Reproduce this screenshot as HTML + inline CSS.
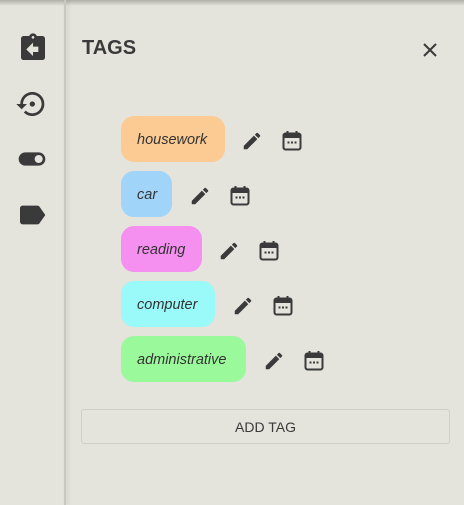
<!DOCTYPE html>
<html><head><style>
html,body{margin:0;padding:0}
body{width:464px;height:505px;background:#e4e4dc;position:relative;overflow:hidden;font-family:"Liberation Sans",sans-serif;color:#3a3a3a}
.top{position:absolute;left:0;top:0;width:464px;height:6px;background:linear-gradient(#b0b0a8,rgba(228,228,220,0))}
.side{position:absolute;left:64px;top:0;width:2px;height:505px;background:#c8c8c0;box-shadow:2px 0 4px rgba(0,0,0,.12)}
.ic{position:absolute;fill:#3a3a3a}
h1{position:absolute;left:82px;top:37px;margin:0;font-size:20px;font-weight:bold;color:#3a3a3a}
.chip{position:absolute;left:121px;height:46px;border-radius:13px;font-style:italic;font-size:14.5px;line-height:48px;padding:0 16px;box-sizing:border-box;color:#333}
.btn{position:absolute;left:81px;top:409px;width:369px;height:35px;border:1px solid #cfcfc7;border-radius:3px;box-sizing:border-box;text-align:center;line-height:34px;font-size:14px}
</style></head><body>
<div class="top"></div>
<div class="side"></div>
<svg class="ic" style="left:17px;top:32px" width="32" height="32" viewBox="0 0 24 24"><path d="M19 3h-4.18C14.4 1.84 13.3 1 12 1c-1.3 0-2.4.84-2.82 2H5c-1.1 0-2 .9-2 2v14c0 1.1.9 2 2 2h14c1.1 0 2-.9 2-2V5c0-1.1-.9-2-2-2zm-7 0c.55 0 1 .45 1 1s-.45 1-1 1-1-.45-1-1 .45-1 1-1zm4 12h-4v3l-5-5 5-5v3h4v4z"/></svg>
<svg class="ic" style="left:15px;top:88px" width="32" height="32" viewBox="0 0 24 24"><path d="M13 3c-4.97 0-9 4.03-9 9H1l3.89 3.89.07.14L9 12H6c0-3.87 3.13-7 7-7s7 3.13 7 7-3.13 7-7 7c-1.93 0-3.68-.79-4.94-2.06l-1.42 1.42C8.27 19.990 10.51 21 13 21c4.97 0 9-4.030 9-9s-4.03-9-9-9z"/><circle cx="13" cy="12" r="2"/></svg>
<svg class="ic" style="left:16px;top:143px" width="32" height="32" viewBox="0 0 24 24"><path d="M17 7H7c-2.76 0-5 2.24-5 5s2.24 5 5 5h10c2.76 0 5-2.24 5-5s-2.24-5-5-5zm0 8c-1.66 0-3-1.34-3-3s1.34-3 3-3 3 1.34 3 3-1.34 3-3 3z"/></svg>
<svg class="ic" style="left:16px;top:199px" width="32" height="32" viewBox="0 0 24 24"><path d="M17.63 5.84C17.27 5.330 16.67 5 16 5L5 5.01C3.9 5.01 3 5.9 3 7v10c0 1.1.9 1.99 2 1.99L16 19c.67 0 1.27-.33 1.63-.84L22 12l-4.37-6.16z"/></svg>
<h1>TAGS</h1>
<svg style="position:absolute;left:420px;top:40px" width="20" height="20" viewBox="0 0 20 20"><path d="M4 4L16 16M16 4L4 16" stroke="#3a3a3a" stroke-width="2"/></svg>

<div class="chip" style="top:116px;background:#fccb94;width:104px">housework</div>
<div class="chip" style="top:171px;background:#a0d4f8;width:51px">car</div>
<div class="chip" style="top:226px;background:#f690f0;width:81px">reading</div>
<div class="chip" style="top:281px;background:#9af9f9;width:94px">computer</div>
<div class="chip" style="top:336px;background:#9af99a;width:125px">administrative</div>

<svg width="0" height="0" style="position:absolute"><defs>
<symbol id="ed" viewBox="0 0 24 24"><path d="M3 17.25V21h3.75L17.81 9.94l-3.75-3.75L3 17.25zM20.71 7.04c.39-.39.39-1.02 0-1.41l-2.34-2.34c-.39-.39-1.02-.39-1.41 0l-1.83 1.83 3.75 3.75 1.83-1.83z"/></symbol>
<symbol id="cal" viewBox="0 0 24 24"><rect x="3.5" y="4.5" width="17" height="16" rx="2" fill="none" stroke="#3a3a3a" stroke-width="2"/><rect x="3.5" y="4.5" width="17" height="4.5" fill="#3a3a3a"/><rect x="6.5" y="2" width="2" height="4"/><rect x="15.5" y="2" width="2" height="4"/><rect x="7.5" y="12.5" width="2" height="2"/><rect x="11" y="12.5" width="2" height="2"/><rect x="14.5" y="12.5" width="2" height="2"/></symbol>
</defs></svg>

<svg class="ic" style="left:241px;top:130px" width="22" height="22"><use href="#ed"/></svg>
<svg class="ic" style="left:280px;top:129px" width="24" height="24"><use href="#cal"/></svg>
<svg class="ic" style="left:189px;top:185px" width="22" height="22"><use href="#ed"/></svg>
<svg class="ic" style="left:228px;top:184px" width="24" height="24"><use href="#cal"/></svg>
<svg class="ic" style="left:218px;top:240px" width="22" height="22"><use href="#ed"/></svg>
<svg class="ic" style="left:257px;top:239px" width="24" height="24"><use href="#cal"/></svg>
<svg class="ic" style="left:232px;top:295px" width="22" height="22"><use href="#ed"/></svg>
<svg class="ic" style="left:271px;top:294px" width="24" height="24"><use href="#cal"/></svg>
<svg class="ic" style="left:263px;top:350px" width="22" height="22"><use href="#ed"/></svg>
<svg class="ic" style="left:302px;top:349px" width="24" height="24"><use href="#cal"/></svg>

<div class="btn">ADD TAG</div>
</body></html>
